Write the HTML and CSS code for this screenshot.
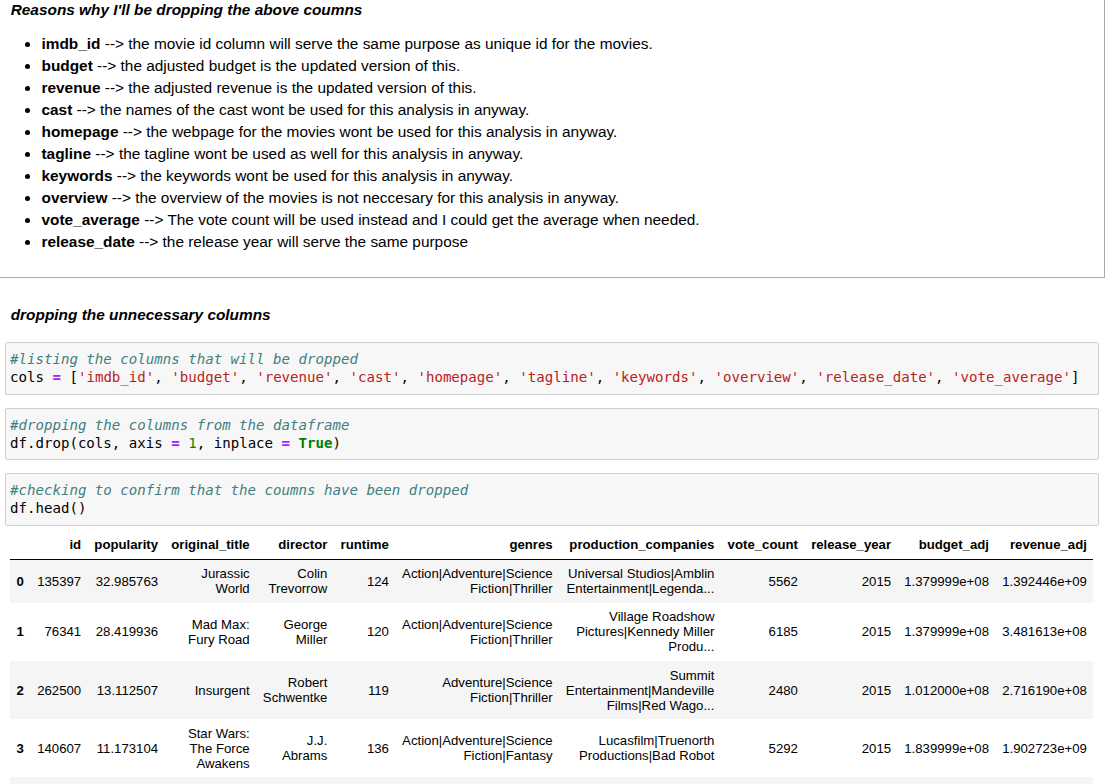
FILE: index.html
```html
<!DOCTYPE html>
<html>
<head>
<meta charset="utf-8">
<title>Notebook</title>
<link rel="stylesheet" href="styles.css">
</head>
<body>
<div class="notebook">
  <div class="cell text-cell selected first">
    <div class="render">
      <p class="em-title">Reasons why I'll be dropping the above coumns</p>
      <ul class="reasons">
        <li><b>imdb_id</b> --&gt; the movie id column will serve the same purpose as unique id for the movies.</li>
        <li><b>budget</b> --&gt; the adjusted budget is the updated version of this.</li>
        <li><b>revenue</b> --&gt; the adjusted revenue is the updated version of this.</li>
        <li><b>cast</b> --&gt; the names of the cast wont be used for this analysis in anyway.</li>
        <li><b>homepage</b> --&gt; the webpage for the movies wont be used for this analysis in anyway.</li>
        <li><b>tagline</b> --&gt; the tagline wont be used as well for this analysis in anyway.</li>
        <li><b>keywords</b> --&gt; the keywords wont be used for this analysis in anyway.</li>
        <li><b>overview</b> --&gt; the overview of the movies is not neccesary for this analysis in anyway.</li>
        <li><b>vote_average</b> --&gt; The vote count will be used instead and I could get the average when needed.</li>
        <li><b>release_date</b> --&gt; the release year will serve the same purpose</li>
      </ul>
    </div>
  </div>

  <div class="cell text-cell">
    <div class="render render-short">
      <p class="em-title">dropping the unnecessary columns</p>
    </div>
  </div>

  <div class="cell code-cell">
    <div class="input-area"><pre class="code"><span class="c">#listing the columns that will be dropped</span>
cols <span class="o">=</span> [<span class="s">'imdb_id'</span>, <span class="s">'budget'</span>, <span class="s">'revenue'</span>, <span class="s">'cast'</span>, <span class="s">'homepage'</span>, <span class="s">'tagline'</span>, <span class="s">'keywords'</span>, <span class="s">'overview'</span>, <span class="s">'release_date'</span>, <span class="s">'vote_average'</span>]</pre></div>
  </div>

  <div class="cell code-cell">
    <div class="input-area"><pre class="code"><span class="c">#dropping the columns from the dataframe</span>
df.drop(cols, axis <span class="o">=</span> <span class="n">1</span>, inplace <span class="o">=</span> <span class="k">True</span>)</pre></div>
  </div>

  <div class="cell code-cell">
    <div class="input-area"><pre class="code"><span class="c">#checking to confirm that the coumns have been dropped</span>
df.head()</pre></div>
    <div class="output">
      <table class="dataframe">
        <thead>
          <tr>
            <th></th><th>id</th><th>popularity</th><th>original_title</th><th>director</th><th>runtime</th><th>genres</th><th>production_companies</th><th>vote_count</th><th>release_year</th><th>budget_adj</th><th>revenue_adj</th>
          </tr>
        </thead>
        <tbody>
          <tr>
            <th>0</th><td>135397</td><td>32.985763</td><td>Jurassic World</td><td>Colin Trevorrow</td><td>124</td><td>Action|Adventure|Science Fiction|Thriller</td><td>Universal Studios|Amblin Entertainment|Legenda...</td><td>5562</td><td>2015</td><td>1.379999e+08</td><td>1.392446e+09</td>
          </tr>
          <tr>
            <th>1</th><td>76341</td><td>28.419936</td><td>Mad Max: Fury Road</td><td>George Miller</td><td>120</td><td>Action|Adventure|Science Fiction|Thriller</td><td>Village Roadshow Pictures|Kennedy Miller Produ...</td><td>6185</td><td>2015</td><td>1.379999e+08</td><td>3.481613e+08</td>
          </tr>
          <tr>
            <th>2</th><td>262500</td><td>13.112507</td><td>Insurgent</td><td>Robert Schwentke</td><td>119</td><td>Adventure|Science Fiction|Thriller</td><td>Summit Entertainment|Mandeville Films|Red Wago...</td><td>2480</td><td>2015</td><td>1.012000e+08</td><td>2.716190e+08</td>
          </tr>
          <tr>
            <th>3</th><td>140607</td><td>11.173104</td><td>Star Wars: The Force Awakens</td><td>J.J. Abrams</td><td>136</td><td>Action|Adventure|Science Fiction|Fantasy</td><td>Lucasfilm|Truenorth Productions|Bad Robot</td><td>5292</td><td>2015</td><td>1.839999e+08</td><td>1.902723e+09</td>
          </tr>
          <tr>
            <th>4</th><td>168259</td><td>9.335014</td><td>Furious 7</td><td>James Wan</td><td>137</td><td>Action|Crime|Thriller</td><td>Universal Pictures|Original Film|Media Rights ...</td><td>2947</td><td>2015</td><td>1.747999e+08</td><td>1.385749e+09</td>
          </tr>
        </tbody>
      </table>
    </div>
  </div>
</div>
</body>
</html>
```
FILE: styles.css
```css
html, body {
  margin: 0;
  padding: 0;
  background: #ffffff;
  overflow: hidden;
}

body {
  font-family: "Liberation Sans", Arial, sans-serif;
  color: #000000;
}

.notebook {
  width: 1107px;
  margin-left: -2px;
}

.cell {
  border: 1px solid transparent;
  padding: 5.5px;
}

.cell.selected {
  border-color: #ababab;
}

.cell.first {
  margin-top: -15px;
}

.render {
  font-size: 15.4px;
  line-height: 22px;
  padding: 7.7px 6px 18.8px 6.2px;
}

.render-short {
  padding: 19.5px 6px 3px 6.2px;
}

.em-title {
  margin: 0;
  font-weight: bold;
  font-style: italic;
}

.reasons {
  list-style: disc;
  margin: 12px 0 0 0;
  padding-left: 30.8px;
}

.reasons li {
  margin: 0;
}

.input-area {
  background: #f7f7f7;
  border: 1px solid #cfcfcf;
  border-radius: 2px;
}

.code {
  margin: 0;
  padding: 7px 4.5px 7.5px;
  font-family: "DejaVu Sans Mono", "Liberation Mono", monospace;
  font-size: 14.1px;
  line-height: 18px;
  color: #000000;
  white-space: pre;
}

.code .c {
  color: #408080;
  font-style: italic;
}

.code .s {
  color: #ba2121;
}

.code .o {
  color: #aa22ff;
  font-weight: bold;
}

.code .n {
  color: #008800;
}

.code .k {
  color: #008000;
  font-weight: bold;
}

.output {
  padding: 4.5px 5.5px 0;
}

.dataframe {
  margin: 0 auto;
  border: none;
  border-collapse: collapse;
  border-spacing: 0;
  font-size: 13.2px;
  color: #000000;
}

.dataframe thead {
  border-bottom: 1px solid #000000;
}

.dataframe th,
.dataframe td {
  text-align: right;
  vertical-align: middle;
  padding: 6.6px 6.6px;
  line-height: normal;
  white-space: normal;
  border: none;
}

.dataframe th {
  font-weight: bold;
}

.dataframe tbody tr:nth-child(odd) {
  background: #f5f5f5;
}
```
